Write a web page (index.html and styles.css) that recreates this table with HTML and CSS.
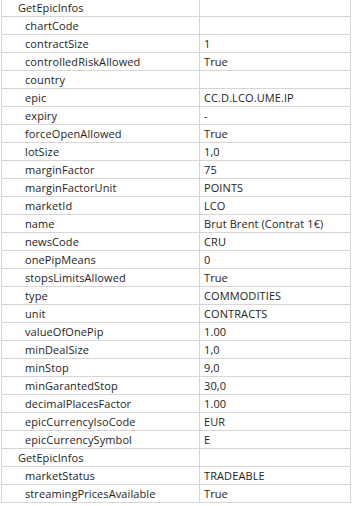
FILE: index.html
```html
<!DOCTYPE html>
<html>
<head>
<meta charset="utf-8">
<link rel="stylesheet" href="styles.css">
</head>
<body>
<div class="grid">
  <div class="row group"><div class="k">GetEpicInfos</div><div class="v"></div></div>
  <div class="row"><div class="k">chartCode</div><div class="v"></div></div>
  <div class="row"><div class="k">contractSize</div><div class="v">1</div></div>
  <div class="row"><div class="k">controlledRiskAllowed</div><div class="v">True</div></div>
  <div class="row"><div class="k">country</div><div class="v"></div></div>
  <div class="row"><div class="k">epic</div><div class="v">CC.D.LCO.UME.IP</div></div>
  <div class="row"><div class="k">expiry</div><div class="v">-</div></div>
  <div class="row"><div class="k">forceOpenAllowed</div><div class="v">True</div></div>
  <div class="row"><div class="k">lotSize</div><div class="v">1,0</div></div>
  <div class="row"><div class="k">marginFactor</div><div class="v">75</div></div>
  <div class="row"><div class="k">marginFactorUnit</div><div class="v">POINTS</div></div>
  <div class="row"><div class="k">marketId</div><div class="v">LCO</div></div>
  <div class="row"><div class="k">name</div><div class="v">Brut Brent (Contrat 1€)</div></div>
  <div class="row"><div class="k">newsCode</div><div class="v">CRU</div></div>
  <div class="row"><div class="k">onePipMeans</div><div class="v">0</div></div>
  <div class="row"><div class="k">stopsLimitsAllowed</div><div class="v">True</div></div>
  <div class="row"><div class="k">type</div><div class="v">COMMODITIES</div></div>
  <div class="row"><div class="k">unit</div><div class="v">CONTRACTS</div></div>
  <div class="row"><div class="k">valueOfOnePip</div><div class="v">1.00</div></div>
  <div class="row"><div class="k">minDealSize</div><div class="v">1,0</div></div>
  <div class="row"><div class="k">minStop</div><div class="v">9,0</div></div>
  <div class="row"><div class="k">minGarantedStop</div><div class="v">30,0</div></div>
  <div class="row"><div class="k">decimalPlacesFactor</div><div class="v">1.00</div></div>
  <div class="row"><div class="k">epicCurrencyIsoCode</div><div class="v">EUR</div></div>
  <div class="row"><div class="k">epicCurrencySymbol</div><div class="v">E</div></div>
  <div class="row group"><div class="k">GetEpicInfos</div><div class="v"></div></div>
  <div class="row"><div class="k">marketStatus</div><div class="v">TRADEABLE</div></div>
  <div class="row"><div class="k">streamingPricesAvailable</div><div class="v">True</div></div>
</div>
</body>
</html>
```
FILE: styles.css
```css
html, body {
  margin: 0;
  padding: 0;
  background: #ffffff;
}
.grid {
  margin: -1px 0 0 1px;
  width: 350px;
  box-sizing: border-box;
  border-left: 1px solid #d6d6d6;
  border-right: 1px solid #d6d6d6;
  font-family: "Open Sans", "Noto Sans", sans-serif;
  font-size: 11px;
  letter-spacing: 0.1px;
  color: #1e1e1e;
}
.row {
  display: grid;
  grid-template-columns: 198px 1fr;
  height: 18px;
  box-sizing: border-box;
  border-bottom: 1px solid #d6d6d6;
}
.k, .v {
  line-height: 18px;
  white-space: nowrap;
  overflow: hidden;
}
.k {
  padding-left: 23px;
  border-right: 1px solid #d6d6d6;
}
.v {
  padding-left: 4px;
}
.group .k {
  padding-left: 16px;
}
```
